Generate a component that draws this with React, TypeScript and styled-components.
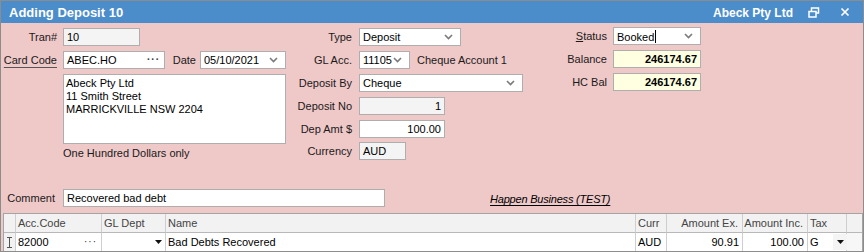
import React from 'react';
import styled, { createGlobalStyle } from 'styled-components';

const Global = createGlobalStyle`
  html, body { margin: 0; padding: 0; background: #ffffff; }
  body { font-family: "Liberation Sans", Arial, sans-serif; font-size: 11px; color: #000; }
  * { box-sizing: border-box; }
`;

const Window = styled.div`
  width: 864px;
  height: 252px;
  border: 1px solid #8c8c8c;
  display: flex;
  flex-direction: column;
  background: #efc8c8;
  overflow: hidden;
`;

const TitleBar = styled.div`
  height: 22px;
  flex: none;
  background: #4b8cca;
  color: #ffffff;
  display: flex;
  align-items: center;
  padding-left: 8px;
`;

const Title = styled.div`
  flex: 1;
  font-size: 13px;
  font-weight: bold;
  padding-top: 1px;
`;

const Company = styled.div`
  font-size: 12px;
  font-weight: bold;
  padding-top: 1px;
`;

const TitleIcon = styled.svg<{ $ml: number }>`
  margin-left: ${p => p.$ml}px;
  display: block;
`;

const Form = styled.div`
  height: 166px;
  flex: none;
  padding-top: 5px;
  display: flex;
  align-items: flex-start;
`;

const Column = styled.div<{ $w: number; $mt?: number }>`
  width: ${p => p.$w}px;
  margin-top: ${p => p.$mt ?? 0}px;
  display: flex;
  flex-direction: column;
  gap: 5px;
`;

const Row = styled.div<{ $mt?: number }>`
  display: flex;
  align-items: center;
  height: 18px;
  margin-top: ${p => p.$mt ?? 0}px;
`;

const Label = styled.span<{ $w?: number; $gap: number; $ml?: number }>`
  width: ${p => (p.$w ? `${p.$w}px` : 'auto')};
  flex: none;
  text-align: right;
  margin-left: ${p => p.$ml ?? 0}px;
  margin-right: ${p => p.$gap}px;
  color: #1a1a1a;
  white-space: nowrap;
`;

const LinkLabel = styled.span`
  text-decoration: underline;
  text-decoration-color: #555;
  text-underline-offset: 3px;
`;

const Field = styled.div<{ $w: number; $bg?: string; $align?: string; $bold?: boolean }>`
  width: ${p => p.$w}px;
  height: 18px;
  flex: none;
  border: 1px solid #aeaeae;
  background: ${p => p.$bg ?? '#ffffff'};
  display: flex;
  align-items: center;
  justify-content: ${p => (p.$align === 'right' ? 'flex-end' : 'flex-start')};
  padding: 0 3px 0 3px;
  font-weight: ${p => (p.$bold ? 'bold' : 'normal')};
  white-space: nowrap;
`;

const FieldText = styled.span`
  flex: 1;
`;

const Dots = styled.span<{ $bold?: boolean }>`
  color: #333;
  letter-spacing: 1px;
  margin-right: 1px;
  font-weight: ${p => (p.$bold ? 'bold' : 'normal')};
  font-size: 10px;
  line-height: 10px;
`;

const Caret = styled.span`
  display: inline-block;
  width: 1px;
  height: 13px;
  background: #000;
  margin-left: 1px;
  vertical-align: -2px;
`;

const Plain = styled.span<{ $ml?: number }>`
  margin-left: ${p => p.$ml ?? 0}px;
  color: #1a1a1a;
  white-space: nowrap;
`;

const AddressBox = styled.div`
  margin-left: 62px;
  width: 223px;
  height: 70px;
  border: 1px solid #aeaeae;
  background: #ffffff;
  padding: 2px 2px;
  line-height: 13px;
`;

const Words = styled.div`
  margin-left: 62px;
  margin-top: -2px;
  height: 13px;
  line-height: 13px;
  color: #1a1a1a;
`;

const CommentRow = styled.div`
  height: 18px;
  flex: none;
  display: flex;
  align-items: center;
`;

const TestLink = styled.span`
  margin-left: 105px;
  font-style: italic;
  text-decoration: underline;
  text-underline-offset: 2px;
  letter-spacing: -0.2px;
  color: #000;
  padding-top: 2px;
`;

const Grid = styled.div`
  margin: 6px 0 0 2px;
  height: 38px;
  flex: none;
  border: 1px solid #a4a4a4;
  border-bottom: none;
  background: #ffffff;
  display: grid;
  grid-template-columns: 12px 86px 64px 470px 31px 76px 65px 39px 1fr;
  grid-template-rows: 19px 18px;
`;

const HeadCell = styled.div<{ $right?: boolean; $last?: boolean }>`
  background: #f2f2f2;
  border-right: ${p => (p.$last ? 'none' : '1px solid #cfcfcf')};
  border-bottom: 1px solid #b8b8b8;
  color: #444;
  display: flex;
  align-items: center;
  justify-content: ${p => (p.$right ? 'flex-end' : 'flex-start')};
  padding: 0 4px 0 2px;
  white-space: nowrap;
`;

const Cell = styled.div<{ $right?: boolean; $bg?: string; $last?: boolean; $pr?: number }>`
  background: ${p => p.$bg ?? '#ffffff'};
  border-right: ${p => (p.$last ? 'none' : '1px solid #cfcfcf')};
  display: flex;
  align-items: center;
  justify-content: ${p => (p.$right ? 'flex-end' : 'flex-start')};
  padding: 0 ${p => p.$pr ?? 3}px 0 2px;
  white-space: nowrap;
`;

const CellText = styled.span`
  flex: 1;
`;

const DropBtn = styled.span`
  width: 14px;
  height: 16px;
  display: flex;
  align-items: center;
  justify-content: center;
  background: #f4f4f4;
  margin-right: -1px;
`;

const Chevron = () => (
  <svg width="9" height="6" viewBox="0 0 9 6" style={{ marginRight: 4, flex: 'none' }}>
    <polyline points="1,1 4.5,4.5 8,1" stroke="#7a7a7a" strokeWidth="1.6" fill="none" />
  </svg>
);

const Tri = () => (
  <svg width="7" height="4" viewBox="0 0 7 4" style={{ flex: 'none' }}>
    <polygon points="0,0 7,0 3.5,4" fill="#111" />
  </svg>
);

const IBeam = () => (
  <svg width="7" height="11" viewBox="0 0 7 11" style={{ flex: 'none' }}>
    <path d="M1 0.5 H6 M1 10.5 H6 M3.5 0.5 V10.5" stroke="#555" strokeWidth="1" fill="none" />
  </svg>
);

export default function App() {
  return (
    <>
      <Global />
      <Window>
        <TitleBar>
          <Title>Adding Deposit 10</Title>
          <Company>Abeck Pty Ltd</Company>
          <TitleIcon $ml={15} width="12" height="11" viewBox="0 0 12 11">
            <rect x="3.5" y="1" width="7" height="5" fill="none" stroke="#fff" strokeWidth="1.5" />
            <rect x="1" y="4.5" width="7" height="5.5" fill="#4b8cca" stroke="#fff" strokeWidth="1.5" />
          </TitleIcon>
          <TitleIcon $ml={20} width="10" height="10" viewBox="0 0 10 10" style={{ marginRight: 13 }}>
            <path d="M1.5 1.5 L8.5 8.5 M8.5 1.5 L1.5 8.5" stroke="#fff" strokeWidth="1.7" />
          </TitleIcon>
        </TitleBar>

        <Form>
          <Column $w={289}>
            <Row>
              <Label $w={56} $gap={6}>Tran#</Label>
              <Field $w={77} $bg="#f4f4f4">10</Field>
            </Row>
            <Row>
              <Label $w={56} $gap={6}><LinkLabel>Card Code</LinkLabel></Label>
              <Field $w={102}>
                <FieldText>ABEC.HO</FieldText>
                <Dots $bold>···</Dots>
              </Field>
              <Label $w={25} $gap={4} $ml={6}>Date</Label>
              <Field $w={86}>
                <FieldText>05/10/2021</FieldText>
                <Chevron />
              </Field>
            </Row>
            <AddressBox>
              Abeck Pty Ltd<br />
              11 Smith Street<br />
              MARRICKVILLE NSW 2204
            </AddressBox>
            <Words>One Hundred Dollars only</Words>
          </Column>

          <Column $w={275}>
            <Row>
              <Label $w={62} $gap={7}>Type</Label>
              <Field $w={102}>
                <FieldText>Deposit</FieldText>
                <Chevron />
              </Field>
            </Row>
            <Row>
              <Label $w={62} $gap={7}>GL Acc.</Label>
              <Field $w={51}>
                <FieldText>11105</FieldText>
                <Chevron />
              </Field>
              <Plain $ml={7}>Cheque Account 1</Plain>
            </Row>
            <Row>
              <Label $w={62} $gap={7}>Deposit By</Label>
              <Field $w={164}>
                <FieldText>Cheque</FieldText>
                <Chevron />
              </Field>
            </Row>
            <Row>
              <Label $w={62} $gap={7}>Deposit No</Label>
              <Field $w={86} $bg="#f4f4f4" $align="right">1</Field>
            </Row>
            <Row>
              <Label $w={62} $gap={7}>Dep Amt $</Label>
              <Field $w={86} $align="right">100.00</Field>
            </Row>
            <Row $mt={-1}>
              <Label $w={62} $gap={7}>Currency</Label>
              <Field $w={47} $bg="#f4f4f4">AUD</Field>
            </Row>
          </Column>

          <Column $w={290} $mt={-1}>
            <Row>
              <Label $w={42} $gap={6}><u>S</u>tatus</Label>
              <Field $w={88}>
                <FieldText>Booked<Caret /></FieldText>
                <Chevron />
              </Field>
            </Row>
            <Row>
              <Label $w={42} $gap={6}>Balance</Label>
              <Field $w={88} $bg="#ffffe1" $align="right" $bold>246174.67</Field>
            </Row>
            <Row>
              <Label $w={42} $gap={6}>HC Bal</Label>
              <Field $w={88} $bg="#ffffe1" $align="right" $bold>246174.67</Field>
            </Row>
          </Column>
        </Form>

        <CommentRow>
          <Label $w={54} $gap={8}>Comment</Label>
          <Field $w={322}>Recovered bad debt</Field>
          <TestLink>Happen Business (TEST)</TestLink>
        </CommentRow>

        <Grid>
          <HeadCell />
          <HeadCell>Acc.Code</HeadCell>
          <HeadCell>GL Dept</HeadCell>
          <HeadCell>Name</HeadCell>
          <HeadCell>Curr</HeadCell>
          <HeadCell $right>Amount Ex.</HeadCell>
          <HeadCell $right>Amount Inc.</HeadCell>
          <HeadCell>Tax</HeadCell>
          <HeadCell $last />

          <Cell $bg="#f2f2f2"><IBeam /></Cell>
          <Cell>
            <CellText>82000</CellText>
            <Dots>···</Dots>
          </Cell>
          <Cell>
            <CellText />
            <Tri />
          </Cell>
          <Cell>Bad Debts Recovered</Cell>
          <Cell>AUD</Cell>
          <Cell $right>90.91</Cell>
          <Cell $right>100.00</Cell>
          <Cell $pr={0}>
            <CellText>G</CellText>
            <DropBtn><Tri /></DropBtn>
          </Cell>
          <Cell $bg="#f7f7f7" $last />
        </Grid>
      </Window>
    </>
  );
}
